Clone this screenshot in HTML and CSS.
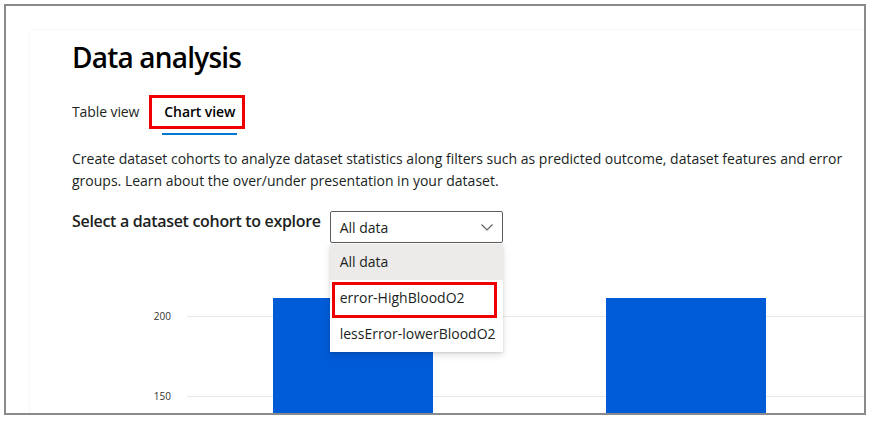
FILE: index.html
```html
<!DOCTYPE html>
<html lang="en">
<head>
<meta charset="utf-8">
<title>Data analysis</title>
<link rel="stylesheet" href="styles.css">
</head>
<body>
<div class="frame">
  <div class="page">
    <div class="card">
      <h1 class="title">Data analysis</h1>
      <div class="tabs">
        <div class="tab">Table view</div>
        <div class="tab tab-active">Chart view<span class="mark mark-tab"></span></div>
      </div>
      <p class="desc">Create dataset cohorts to analyze dataset statistics along filters such as predicted outcome, dataset features and error groups. Learn about the over/under presentation in your dataset.</p>
      <div class="select-row">
        <div class="select-label">Select a dataset cohort to explore</div>
        <div class="dropdown">
          <div class="dropdown-box">
            <span class="dropdown-value">All data</span>
            <svg class="chevron" width="12" height="7" viewBox="0 0 12 7"><path d="M0.5 0.5 L6 6 L11.5 0.5" fill="none" stroke="#605e5c" stroke-width="1.1"/></svg>
          </div>
          <div class="menu">
            <div class="menu-item menu-item-selected">All data</div>
            <div class="menu-item">error-HighBloodO2<span class="mark mark-item"></span></div>
            <div class="menu-item">lessError-lowerBloodO2</div>
          </div>
        </div>
      </div>
      <div class="chart">
        <svg class="chart-svg" width="820" height="170" viewBox="0 0 820 170">
          <line x1="115" y1="65.5" x2="820" y2="65.5" stroke="#e8e8e8" stroke-width="1"/>
          <line x1="115" y1="145.5" x2="820" y2="145.5" stroke="#e8e8e8" stroke-width="1"/>
          <text x="99" y="68.5" text-anchor="end" class="axis-label">200</text>
          <text x="99" y="148.5" text-anchor="end" class="axis-label">150</text>
          <rect x="201" y="47" width="160" height="130" fill="#005bd6"/>
          <rect x="534" y="47" width="160" height="130" fill="#005bd6"/>
        </svg>
      </div>
    </div>
  </div>
</div>
</body>
</html>
```
FILE: styles.css
```css
* { box-sizing: border-box; }
html, body { margin: 0; padding: 0; background: #ffffff; }
body {
  font-family: "Open Sans", "Noto Sans", sans-serif;
  color: #201f1e;
  width: 873px;
  height: 421px;
  overflow: hidden;
}
.frame {
  margin: 4px 0 0 4px;
  width: 862px;
  height: 411px;
  border: 2px solid #8a8a8a;
  overflow: hidden;
  background: #fff;
}
.page {
  padding: 24px 0 0 24px;
}
.card {
  width: 900px;
  height: 500px;
  padding: 9px 0 0 42px;
  box-shadow: 0 0 2px rgba(0,0,0,0.08);
  background: #fff;
}
.title {
  margin: 0;
  font-size: 28px;
  line-height: 36px;
  font-weight: 600;
  color: #000;
  letter-spacing: -0.8px;
}
.tabs {
  display: flex;
  align-items: flex-start;
  margin-top: 27px;
  height: 36px;
}
.tab {
  position: relative;
  font-size: 14px;
  line-height: 20px;
  height: 20px;
  padding: 0 25px 0 0;
  color: #201f1e;
  letter-spacing: -0.1px;
}
.tab-active {
  font-weight: 600;
  color: #000;
  padding: 0 6px 0 0;
}
.tab-active::after {
  content: "";
  position: absolute;
  left: -2px;
  right: 4px;
  top: 31px;
  height: 2px;
  background: #0078d4;
}
.mark {
  position: absolute;
  border: 3px solid #ee0000;
  pointer-events: none;
}
.mark-tab {
  left: -15px;
  right: -4px;
  top: -7px;
  bottom: -7px;
}
.desc {
  margin: 10px 0 0 0;
  width: 790px;
  font-size: 14px;
  line-height: 22px;
  color: #201f1e;
}
.select-row {
  display: flex;
  align-items: flex-start;
  gap: 9px;
  margin-top: 19px;
}
.select-label {
  font-size: 16px;
  font-weight: 600;
  line-height: 22px;
  color: #201f1e;
  letter-spacing: -0.32px;
  margin-top: -1px;
}
.dropdown {
  position: relative;
  width: 173px;
}
.dropdown-box {
  height: 32px;
  border: 1px solid #605e5c;
  border-radius: 2px;
  display: flex;
  align-items: center;
  justify-content: space-between;
  padding: 0 9px 0 9px;
  font-size: 14px;
}
.chevron { display: block; }
.menu {
  position: absolute;
  left: 0;
  top: 33px;
  width: 173px;
  background: #fff;
  box-shadow: 0 3.2px 7.2px rgba(0,0,0,0.13), 0 0.6px 1.8px rgba(0,0,0,0.11);
  z-index: 5;
}
.menu-item {
  position: relative;
  height: 36px;
  line-height: 36px;
  padding-left: 10px;
  font-size: 14px;
  color: #201f1e;
}
.menu-item-selected { background: #edebe9; }
.mark-item {
  left: 2px;
  right: 6px;
  top: 2px;
  bottom: -2px;
}
.chart {
  margin-top: 8px;
}
.chart-svg { display: block; }
.axis-label {
  font-family: "Open Sans", "Noto Sans", sans-serif;
  font-size: 10px;
  fill: #323130;
}
```
